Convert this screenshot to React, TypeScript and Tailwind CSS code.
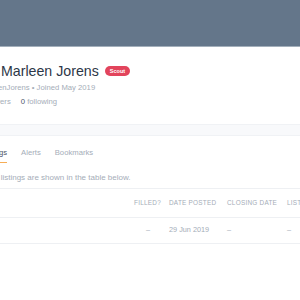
import React from "react";

export default function App() {
  return (
    <div className="w-[300px] h-[300px] overflow-hidden bg-white" style={{ fontFamily: '"Liberation Sans", Arial, sans-serif' }}>
      <div className="h-[46px] bg-[#64768a]" />
      <div className="h-px bg-[#a3afbb]" />
      <div className="pt-[14px] flex items-center whitespace-nowrap">
        <span className="ml-[1px] text-[14.2px] leading-[20px] text-[#2d3748]">Marleen Jorens</span>
        <span className="ml-[6px] h-[10px] px-[5px] rounded-full bg-[#e2445c] text-white text-[5.5px] font-bold leading-[10px]">Scout</span>
      </div>
      <div className="mt-[1px] whitespace-nowrap text-[7.7px] leading-[12px] text-[#a5adb8] -ml-[29px]">@MarleenJorens • Joined May 2019</div>
      <div className="mt-[2px] whitespace-nowrap text-[7.7px] leading-[12px] text-[#a5adb8] -ml-[26px] flex gap-[10px]">
        <span><span className="text-[#4a5568]">0</span> followers</span>
        <span><span className="text-[#4a5568]">0</span> following</span>
      </div>
      <div className="mt-[16px] h-[12px] bg-[#f8f9fb] border-y border-[#f0f2f5]" />
      <div className="mt-[11px] flex whitespace-nowrap text-[7.7px] leading-[12px] text-[#a5adb8] gap-[14px] -ml-[19px]">
        <span className="text-[#4a5568] border-b border-[#f6ad55] pb-[3px]">Listings</span>
        <span>Alerts</span>
        <span>Bookmarks</span>
      </div>
      <div className="mt-[9px] whitespace-nowrap text-[8px] leading-[12px] text-[#a5adb8] -ml-[36px]">Marleen's listings are shown in the table below.</div>
      <div className="mt-[4px] border-t border-[#eef0f3] -ml-[20px] w-[340px]">
        <div className="flex items-center h-[29px] border-b border-[#eef0f3] text-[6.4px] uppercase tracking-[0.25px] text-[#a5adb8] whitespace-nowrap">
          <span className="w-[154px]">Title</span>
          <span className="w-[35px]">Filled?</span>
          <span className="w-[58px]">Date posted</span>
          <span className="w-[60px]">Closing date</span>
          <span>Listed</span>
        </div>
        <div className="flex items-center h-[26px] border-b border-[#eef0f3] text-[7.3px] text-[#a5adb8] whitespace-nowrap">
          <span className="w-[154px]"></span>
          <span className="w-[35px] pl-[12px]">–</span>
          <span className="w-[58px]">29 Jun 2019</span>
          <span className="w-[60px]">–</span>
          <span>–</span>
        </div>
      </div>
    </div>
  );
}
